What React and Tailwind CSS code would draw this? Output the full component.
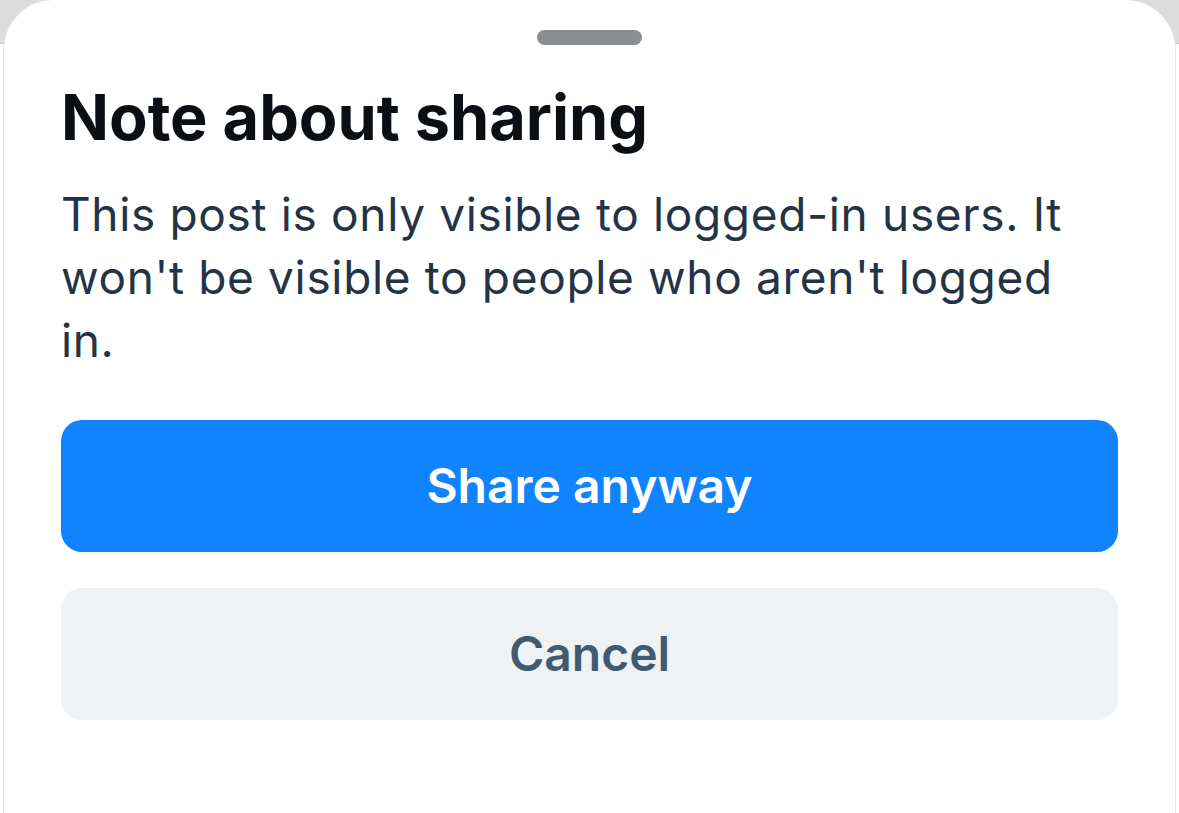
import React from "react";

// Нижний лист: предупреждение перед тем, как поделиться постом

export default function App() {
  const font = { fontFamily: "Inter, 'Noto Sans', sans-serif" };

  return (
    <div
      className="w-[1179px] h-[813px] overflow-hidden bg-[linear-gradient(to_bottom,#dcdcdc_43px,#c9c9c9_43px,#c9c9c9_44px,#ffffff_44px)]"
      style={font}
    >
      <div className="mx-[3px] h-full bg-white rounded-t-[50px] border-x border-[#e4e4e4] px-[57px]">
        <div className="flex justify-center pt-[30px]">
          <div className="w-[105px] h-[15px] rounded-full bg-[#8a8d91]" />
        </div>
        <h1 className="mt-[36px] text-[63px] leading-[72px] font-bold text-[#0b0f14]">
          Note about sharing
        </h1>
        <p className="mt-[30px] text-[46px] leading-[63px] tracking-[0.65px] text-[#243447]">
          This post is only visible to logged-in users. It won't be visible to people who aren't logged in.
        </p>
        <div className="mt-[48px] flex flex-col gap-[36px]">
          <button className="h-[132px] w-full rounded-[21px] bg-[#1083fe] text-white text-[48px] font-semibold">
            Share anyway
          </button>
          <button className="h-[132px] w-full rounded-[21px] bg-[#eff2f4] text-[#425a70] text-[48px] font-semibold">
            Cancel
          </button>
        </div>
      </div>
    </div>
  );
}
